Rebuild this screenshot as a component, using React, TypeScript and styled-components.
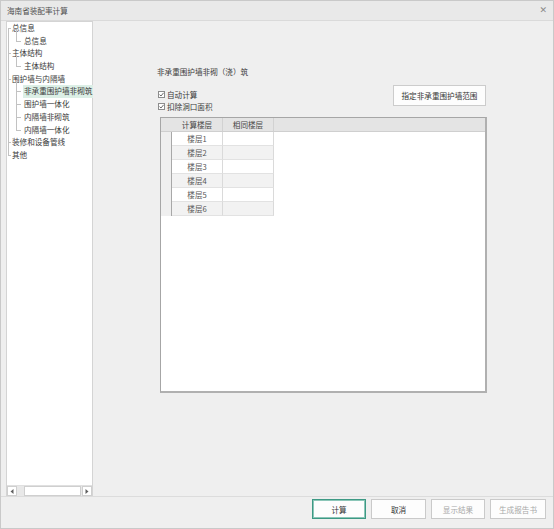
import React from 'react';
import styled, { createGlobalStyle } from 'styled-components';

const GlobalStyle = createGlobalStyle`
  html, body {
    margin: 0;
    padding: 0;
    background: #ffffff;
  }
  body {
    font-family: "Noto Sans CJK SC", "Noto Sans", sans-serif;
  }
`;

const Window = styled.div`
  width: 554px;
  height: 529px;
  box-sizing: border-box;
  border: 1px solid #c9c9c9;
  background-color: #efefef;
  display: flex;
  flex-direction: column;
  font-size: 7.6px;
  color: #3a3a3a;
`;

const TitleBar = styled.div`
  height: 19px;
  flex-shrink: 0;
  background-color: #e9e9e9;
  border-bottom: 1px solid #dadada;
  display: flex;
  align-items: center;
  justify-content: space-between;
  padding: 0 6px 0 6px;
`;

const Title = styled.span`
  color: #505050;
  font-size: 7.6px;
`;

const Close = styled.span`
  color: #8a8a8a;
  font-family: "DejaVu Sans", sans-serif;
  font-size: 9px;
  line-height: 1;
`;

const Body = styled.div`
  flex: 1;
  display: flex;
  min-height: 0;
  border-bottom: 1px solid #dcdcdc;
`;

const TreePanel = styled.div`
  width: 87px;
  margin: 0 0 0 5px;
  box-sizing: border-box;
  border: 1px solid #d4d4d4;
  border-bottom: none;
  background-color: #ffffff;
  display: flex;
  flex-direction: column;
`;

const TreeList = styled.div`
  flex: 1;
  position: relative;
  &::before {
    content: '';
    position: absolute;
    left: 1px;
    top: 6px;
    height: 127px;
    border-left: 1px solid #c2c2c2;
  }
`;

const TreeRow = styled.div<{ $child?: boolean; $selected?: boolean }>`
  position: relative;
  height: 12.7px;
  line-height: 12.7px;
  padding-left: ${(p) => (p.$child ? '16px' : '4px')};
  white-space: nowrap;
  &::before {
    content: '';
    position: absolute;
    left: ${(p) => (p.$child ? '9px' : '1px')};
    top: 6px;
    width: ${(p) => (p.$child ? '5px' : '3px')};
    border-top: 1px solid #c2c2c2;
  }
  & > span {
    display: inline-block;
    padding: 0 1px;
    background-color: ${(p) => (p.$selected ? '#dcefe6' : 'transparent')};
  }
`;

const ChildGroup = styled.div`
  position: relative;
  &::before {
    content: '';
    position: absolute;
    left: 9px;
    top: -5px;
    bottom: 6px;
    border-left: 1px solid #c2c2c2;
  }
`;

const ScrollBar = styled.div`
  height: 10px;
  display: flex;
  background-color: #e8e8e8;
  border-top: 1px solid #e0e0e0;
  flex-shrink: 0;
`;

const ScrollArrow = styled.div`
  width: 10px;
  box-sizing: border-box;
  background: #ffffff;
  border: 1px solid #cfcfcf;
  display: flex;
  align-items: center;
  justify-content: center;
`;

const ScrollTrack = styled.div`
  flex: 1;
  display: flex;
  padding-left: 7px;
`;

const ScrollThumb = styled.div`
  width: 57px;
  box-sizing: border-box;
  background: #ffffff;
  border: 1px solid #cfcfcf;
`;

const Main = styled.div`
  flex: 1;
  padding: 45px 0 0 64px;
`;

const Content = styled.div`
  width: 330px;
  display: flex;
  flex-direction: column;
`;

const SectionLabel = styled.div`
  height: 11px;
  line-height: 11px;
`;

const OptionsRow = styled.div`
  display: flex;
  justify-content: space-between;
  align-items: flex-start;
  margin-top: 8px;
`;

const Checks = styled.div`
  display: flex;
  flex-direction: column;
  padding-left: 1px;
  padding-top: 3px;
`;

const CheckRow = styled.label`
  display: flex;
  align-items: center;
  height: 12px;
  gap: 2px;
`;

const Box = styled.span`
  width: 7px;
  height: 7px;
  box-sizing: border-box;
  border: 1px solid #8c8c8c;
  background: #ffffff;
  display: flex;
  align-items: center;
  justify-content: center;
`;

const ActionButton = styled.button`
  width: 93px;
  height: 21px;
  margin-right: 1px;
  box-sizing: border-box;
  border: 1px solid #cccccc;
  background-color: #fdfdfd;
  font-family: inherit;
  font-size: 7.6px;
  color: #333333;
  padding: 0;
`;

const Grid = styled.div`
  margin: 5px 0 0 3px;
  width: 327px;
  height: 276px;
  box-sizing: border-box;
  background: #ffffff;
  border: 1px solid #a6a6a6;
  border-right: 2px solid #b0b0b0;
  border-bottom: 2px solid #b0b0b0;
`;

const HeaderRow = styled.div`
  display: flex;
  height: 13px;
  background-color: #e4e4e4;
  border-bottom: 1px solid #cfcfcf;
`;

const HeaderCell = styled.div<{ $w: number; $plain?: boolean }>`
  width: ${(p) => p.$w}px;
  box-sizing: border-box;
  border-right: ${(p) => (p.$plain ? 'none' : '1px solid #d2d2d2')};
  text-align: center;
  line-height: 13px;
  color: #444444;
`;

const DataRow = styled.div<{ $alt?: boolean }>`
  display: flex;
  width: max-content;
  height: 14px;
  & > div:not(:first-child) {
    background-color: ${(p) => (p.$alt ? '#f2f2f2' : '#ffffff')};
  }
`;

const RowHead = styled.div`
  width: 10px;
  background-color: #efefef;
  border-right: 1px solid #a8a8a8;
`;

const Cell = styled.div<{ $w: number }>`
  width: ${(p) => p.$w}px;
  box-sizing: border-box;
  border-right: 1px solid #dadada;
  border-bottom: 1px solid #e2e2e2;
  text-align: center;
  line-height: 14px;
  color: #555555;
`;

const Footer = styled.div`
  height: 29px;
  flex-shrink: 0;
  display: flex;
  justify-content: flex-end;
  align-items: flex-start;
  gap: 5px;
  padding: 2px 7px 0 0;
`;

const FooterButton = styled.button<{ $primary?: boolean; $w: number }>`
  width: ${(p) => p.$w}px;
  height: 20px;
  box-sizing: border-box;
  padding: 0;
  font-family: inherit;
  font-size: 7.6px;
  background-color: #fdfdfd;
  color: ${(p) => (p.disabled ? '#a8a8a8' : '#333333')};
  border: ${(p) => (p.$primary ? '1px solid #3d9984' : '1px solid #cacaca')};
  box-shadow: ${(p) => (p.$primary ? 'inset 0 0 0 1px #8cc6b8' : 'none')};
`;

const floors = ['楼层1', '楼层2', '楼层3', '楼层4', '楼层5', '楼层6'];

const Check = () => (
  <Box>
    <svg width="5" height="5" viewBox="0 0 5 5">
      <path d="M0.5 2.6 L2 4 L4.6 0.8" fill="none" stroke="#444" strokeWidth="0.8" />
    </svg>
  </Box>
);

const App: React.FC = () => {
  return (
    <>
      <GlobalStyle />
      <Window>
        <TitleBar>
          <Title>海南省装配率计算</Title>
          <Close>✕</Close>
        </TitleBar>
        <Body>
          <TreePanel>
            <TreeList>
              <TreeRow><span>总信息</span></TreeRow>
              <ChildGroup>
                <TreeRow $child><span>总信息</span></TreeRow>
              </ChildGroup>
              <TreeRow><span>主体结构</span></TreeRow>
              <ChildGroup>
                <TreeRow $child><span>主体结构</span></TreeRow>
              </ChildGroup>
              <TreeRow><span>围护墙与内隔墙</span></TreeRow>
              <ChildGroup>
                <TreeRow $child $selected><span>非承重围护墙非砌筑</span></TreeRow>
                <TreeRow $child><span>围护墙一体化</span></TreeRow>
                <TreeRow $child><span>内隔墙非砌筑</span></TreeRow>
                <TreeRow $child><span>内隔墙一体化</span></TreeRow>
              </ChildGroup>
              <TreeRow><span>装修和设备管线</span></TreeRow>
              <TreeRow><span>其他</span></TreeRow>
            </TreeList>
            <ScrollBar>
              <ScrollArrow>
                <svg width="4" height="5" viewBox="0 0 4 5"><path d="M3.5 0 L0.5 2.5 L3.5 5 Z" fill="#606060" /></svg>
              </ScrollArrow>
              <ScrollTrack>
                <ScrollThumb />
              </ScrollTrack>
              <ScrollArrow>
                <svg width="4" height="5" viewBox="0 0 4 5"><path d="M0.5 0 L3.5 2.5 L0.5 5 Z" fill="#606060" /></svg>
              </ScrollArrow>
            </ScrollBar>
          </TreePanel>
          <Main>
            <Content>
              <SectionLabel>非承重围护墙非砌（浇）筑</SectionLabel>
              <OptionsRow>
                <Checks>
                  <CheckRow><Check />自动计算</CheckRow>
                  <CheckRow><Check />扣除洞口面积</CheckRow>
                </Checks>
                <ActionButton>指定非承重围护墙范围</ActionButton>
              </OptionsRow>
              <Grid>
                <HeaderRow>
                  <HeaderCell $w={11} $plain />
                  <HeaderCell $w={51}>计算楼层</HeaderCell>
                  <HeaderCell $w={51}>相同楼层</HeaderCell>
                </HeaderRow>
                {floors.map((f, i) => (
                  <DataRow key={f} $alt={i % 2 === 1}>
                    <RowHead />
                    <Cell $w={51}>{f}</Cell>
                    <Cell $w={51} />
                  </DataRow>
                ))}
              </Grid>
            </Content>
          </Main>
        </Body>
        <Footer>
          <FooterButton $primary $w={54}>计算</FooterButton>
          <FooterButton $w={55}>取消</FooterButton>
          <FooterButton $w={54} disabled>显示结果</FooterButton>
          <FooterButton $w={56} disabled>生成报告书</FooterButton>
        </Footer>
      </Window>
    </>
  );
};

export default App;
